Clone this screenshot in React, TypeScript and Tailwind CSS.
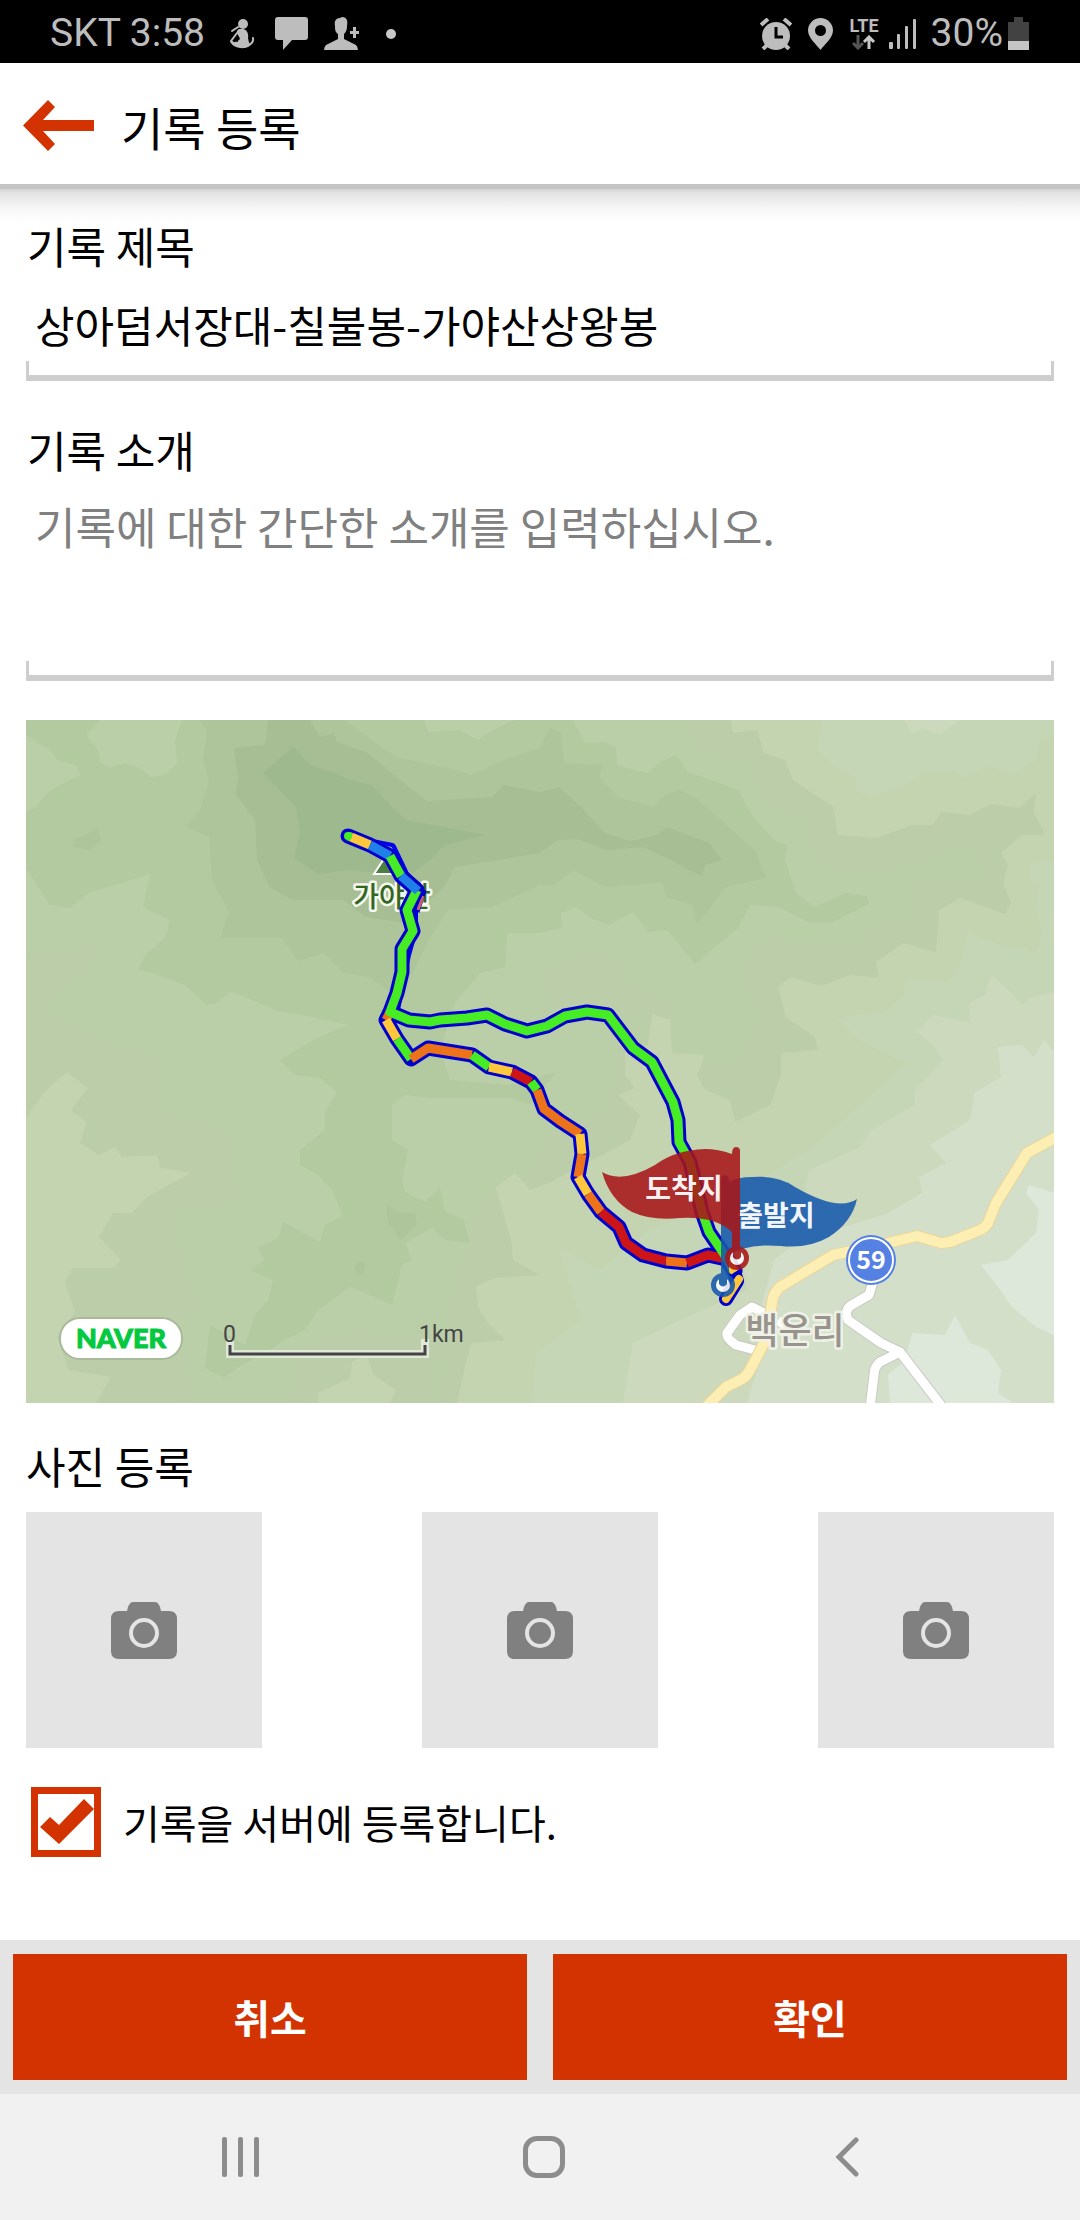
import React, { useState } from 'react';

const COLORS = {
  green: '#46ec24',
  yellow: '#ffc83c',
  orange: '#ec731a',
  red: '#cd1517',
  blue: '#2080e8',
};

// terrain, painted from the valley tones up to the ridge
const terrain = [
  { fill: '#bccdaa', d: 'M678 720L705 753L747 763L767 800L809 823L809 853L833 873L884 873L977 842L981 877L915 883L912 917L871 927L860 945L767 938L743 963L747 997L764 1010L740 1060L620 1060L600 1110L545 1140L520 1180L480 1200L450 1300L440 1403L1054 1403L1054 720Z' },
  { fill: '#bccdaa', d: 'M540 990L548 968L585 952L625 960L627 985L672 998L670 1020L560 1015Z' },
  { fill: '#bccdaa', d: 'M26 955L96 943L90 965L45 1015L160 1060L160 1110L225 1130L240 1200L175 1215L180 1260L200 1300L170 1330L190 1370L190 1403L26 1403Z' },
  { fill: '#bccdaa', d: 'M300 1345L360 1330L440 1340L430 1403L290 1403Z' },
  { fill: '#c4d4b1', d: 'M26 1118L44 1092L67 1072L88 1088L71 1110L86 1122L80 1143L99 1155L115 1147L122 1157L157 1155L161 1168L191 1173L147 1197L132 1213L113 1213L99 1237L121 1260L113 1268L73 1268L65 1282L75 1312L57 1337L69 1370L111 1377L96 1403L26 1403Z' },
  { fill: '#c4d4b1', d: 'M318 1393L350 1378L352 1362L366 1355L374 1375L396 1390L390 1403L318 1403Z' },
  { fill: '#c4d4b1', d: 'M731 720L733 733L757 730L764 753L785 760L793 780L833 807L838 835L877 838L912 825L933 825L941 812L969 815L991 804L1019 808L1036 793L1034 813L1045 835L1022 835L1001 853L1008 865L1003 883L1011 903L1005 914L960 898L939 910L936 952L903 943L876 962L879 978L850 975L821 986L791 977L778 987L786 1017L815 1037L818 1050L781 1053L781 1075L770 1105L735 1122L730 1100L705 1090L697 1075L705 1055L672 1053L670 1020L652 1014L648 1045L625 1050L625 1075L635 1088L618 1095L640 1115L630 1140L549 1183L530 1190L515 1173L496 1187L511 1240L513 1260L540 1275L494 1278L476 1287L478 1307L488 1323L505 1340L471 1343L465 1367L457 1403L1054 1403L1054 720Z' },
  { fill: '#c5d6b6', d: 'M822 720L817 750L836 768L855 777L857 792L871 796L902 787L922 772L953 770L964 778L988 765L1012 775L1036 760L1039 740L1054 735L1054 720Z' },
  { fill: '#c5d6b6', d: 'M1054 860L1029 863L1031 882L1039 883L1036 913L1043 930L1036 955L1022 945L1010 949L967 932L960 967L946 982L908 977L902 997L884 1012L836 1018L864 1043L905 1063L877 1090L836 1127L809 1150L760 1180L650 1230L600 1270L559 1247L570 1287L582 1320L536 1353L532 1403L1054 1403Z' },
  { fill: '#ccd9bc', d: 'M904 720L912 733L922 728L940 735L960 720ZM991 975L1008 990L1022 1005L1029 998L1054 992L1054 1403L623 1403L633 1343L674 1323L747 1290L740 1240L800 1210L809 1170L860 1147L871 1130L915 1105L915 1090L943 1060L933 1045L917 1032L933 1015L970 1022L969 1003L985 995Z' },
  { fill: '#d3dfc8', d: 'M1044 1040L1054 1052L1054 1403L747 1403L762 1353L760 1310L774 1260L795 1243L888 1213L922 1193L919 1177L946 1163L930 1145L970 1120L974 1093L1001 1077L998 1047L1022 1045L1034 1057Z' },
  { fill: '#dee8da', d: 'M1054 1193L1045 1190L1029 1185L1026 1193L1039 1210L1036 1233L1008 1260L981 1265L998 1287L1012 1307L1036 1327L1054 1335ZM955 1315L970 1343L988 1350L1001 1370L998 1393L1013 1403L890 1403L888 1375L905 1360L912 1333L945 1335Z' },
  { fill: '#b3c99f', d: 'M26 720L100 720L86 735L98 750L100 762L110 768L125 763L140 768L150 777L165 775L177 763L175 740L182 720L573 720L585 743L605 742L616 747L617 765L647 773L660 762L676 755L688 772L738 790L753 817L774 840L787 845L785 860L796 893L814 907L846 893L867 896L869 904L833 922L810 923L778 907L750 905L738 928L709 952L695 964L667 930L648 932L633 912L609 925L590 918L576 907L561 913L562 928L540 933L507 933L505 967L480 973L455 1003L440 1050L450 1080L510 1085L530 1080L556 1072L530 1105L512 1098L430 1098L405 1095L392 1105L392 1140L408 1150L402 1180L405 1192L425 1202L440 1188L445 1212L464 1220L470 1243L445 1240L432 1228L405 1243L412 1260L402 1265L392 1305L370 1295L350 1287L318 1310L305 1330L285 1340L262 1355L240 1366L224 1378L205 1368L210 1325L245 1345L255 1315L268 1300L273 1280L250 1270L265 1260L258 1248L278 1238L283 1222L320 1242L325 1225L343 1216L332 1190L318 1175L300 1165L300 1150L325 1130L325 1112L337 1092L320 1078L295 1075L280 1060L313 1040L347 1025L313 1017L275 1010L231 991L215 1004L205 1004L185 985L150 972L138 970L145 955L165 938L170 920L143 907L150 874L115 885L90 892L70 908L50 905L26 868L26 812L35 808L45 795L60 785L80 775L76 765L57 760L50 750L26 735Z' },
  { fill: '#bacfa8', d: 'M424 720L428 732L460 730L478 740L492 730L515 720Z' },
  { fill: '#aec59b', d: 'M200 720L207 733L203 760L209 782L200 810L186 827L209 837L212 880L229 912L220 938L282 938L298 961L324 953L344 973L370 977L400 1000L427 943L448 910L492 907L540 885L554 885L573 870L605 887L662 883L666 897L692 905L697 924L726 887L766 878L755 850L729 827L695 797L678 790L662 797L654 807L619 798L599 777L602 765L564 763L561 733L550 727L540 748L503 760L472 775L444 767L396 757L368 737L345 720Z' },
  { fill: '#a7be94', d: 'M268 720L265 745L234 748L238 777L236 795L255 820L257 860L269 887L293 900L344 900L365 917L406 923L444 887L455 867L540 853L557 840L578 839L605 850L643 847L671 860L688 870L702 876L705 865L722 860L709 843L667 827L657 835L630 841L605 833L581 807L559 787L540 792L503 785L492 797L427 801L400 780L368 753L337 742L334 733L320 737L310 720Z' },
  { fill: '#9fb98f', d: 'M293 747L310 765L334 773L350 780L372 785L390 805L406 820L444 827L486 835L444 845L430 860L410 875L344 870L320 875L294 858L300 833L296 807L263 773Z' },
  { fill: '#aec59b', d: 'M73 840L88 834L97 828L101 840L90 850L73 847ZM387 1203L395 1212L415 1213L417 1225L400 1240L387 1220ZM355 1265L362 1260L366 1268L360 1275L355 1270Z' },
];

const climb = [
  { color: COLORS.orange, points: '390,1012 386,1020' },
  { color: COLORS.yellow, points: '386,1020 397,1039' },
  { color: COLORS.green, points: '397,1039 411,1059' },
  { color: COLORS.orange, points: '411,1059 428,1048 472,1055' },
  { color: COLORS.green, points: '472,1055 489,1067' },
  { color: COLORS.yellow, points: '489,1067 512,1072' },
  { color: COLORS.red, points: '512,1072 531,1082' },
  { color: COLORS.green, points: '531,1082 537,1090' },
  { color: COLORS.orange, points: '537,1090 544,1109 560,1121 580,1134' },
  { color: COLORS.yellow, points: '580,1134 582,1154' },
  { color: COLORS.orange, points: '582,1154 578,1177' },
  { color: COLORS.yellow, points: '578,1177 588,1194' },
  { color: COLORS.orange, points: '588,1194 601,1212' },
  { color: COLORS.red, points: '601,1212 619,1227 626,1243 643,1255 666,1261' },
  { color: COLORS.orange, points: '666,1261 687,1263' },
  { color: COLORS.red, points: '687,1263 708,1255 726,1259' },
];

const summit = [
  { color: COLORS.green, points: '348,836 351,837' },
  { color: COLORS.yellow, points: '351,837 370,845' },
  { color: COLORS.blue, points: '370,845 390,856' },
  { color: COLORS.green, points: '390,856 401,876' },
  { color: COLORS.blue, points: '401,876 418,891' },
];

const CLIMB_LINE =
  '390,1012 386,1020 397,1039 411,1059 428,1048 472,1055 489,1067 512,1072 531,1082 537,1090 544,1109 560,1121 580,1134 582,1154 578,1177 588,1194 601,1212 619,1227 626,1243 643,1255 666,1261 687,1263 708,1255 726,1259';
const DESCENT_LINE =
  '417,890 407,910 413,931 402,949 402,972 397,993 390,1012 409,1020 430,1022 440,1020 467,1018 487,1015 505,1024 527,1031 547,1026 565,1016 587,1012 608,1015 633,1048 652,1062 673,1102 678,1120 679,1142 690,1162 702,1212 709,1232 728,1260 734,1272';
const YELLOW_ROAD =
  'M1060 1135L1027 1153L996 1203L988 1223Q985 1228 980 1230L950 1242L941 1243L917 1236L871 1247L833 1255L780 1287Q773 1293 772 1303L768 1330L764 1343L750 1370Q747 1376 742 1379L726 1387L703 1410';
const WHITE_ROADS =
  'M874 1278L869 1295L850 1306Q844 1312 848 1320L881 1343L900 1352L943 1408M900 1352L880 1362Q874 1367 874 1375L870 1408M766 1314L752 1307L740 1315L727 1333Q726 1338 736 1345L755 1350M778 1320L790 1330';

const StatusBar = () => (
  <div className="flex h-[63px] items-center justify-between bg-black pt-1 pr-[51px] pl-[50px] font-[Roboto,sans-serif] text-[39px] leading-none text-[#bdbdbd]">
    <div className="flex items-center">
      <span className="whitespace-nowrap">SKT 3:58</span>
      <svg className="ml-[24px] h-[30px] w-[26px]" viewBox="0 0 26 30" fill="none" stroke="currentColor">
        <circle cx="14" cy="5" r="5" fill="currentColor" stroke="none" />
        <path d="M10 10C5 13 10 16 11 20C8 23 4 24 1 23C5 30 19 32 23 24C20 26 20 23 19 19C20 14 17 10 14 10Z" fill="currentColor" stroke="none" />
        <path d="M9 8L3 12M8 14L2 22L8 27M24 19Q25 24 18 27" strokeWidth="2" strokeLinecap="round" />
        <path d="M9 18L6 22L9 23Z" fill="#000" stroke="none" />
      </svg>
      <svg className="ml-[20px] h-[33px] w-[33px]" viewBox="0 0 33 33" fill="currentColor">
        <path d="M3 0H30Q33 0 33 3V20Q33 23 30 23H17L8 33V23H3Q0 23 0 20V3Q0 0 3 0Z" />
      </svg>
      <svg className="ml-[16px] h-[33px] w-[35px]" viewBox="0 0 35 33" fill="currentColor">
        <path d="M18 0C23 0 24 4 23 9C23 13 22 15 20 17V22L32 28Q34 30 34 33H0Q0 30 2 28L14 22V17C11 15 11 12 11 9C10 4 12 1 16 1Z" />
        <path d="M29 10H32V14H35V17H32V21H29V17H26V14H29Z" />
      </svg>
      <span className="ml-[27px] size-[10px] rounded-full bg-[#c9c9c9]" />
    </div>
    <div className="flex items-center">
      <svg className="h-[32px] w-[32px]" viewBox="0 0 32 32">
        <circle cx="16" cy="18" r="14" fill="#bdbdbd" />
        <path d="M1 7L8 1M31 7L24 1" stroke="#bdbdbd" strokeWidth="4" />
        <path d="M7 27L3 31M25 27L29 31" stroke="#bdbdbd" strokeWidth="4" />
        <path d="M16 9V19H23" stroke="#000" strokeWidth="3" fill="none" />
      </svg>
      <svg className="ml-[16px] h-[32px] w-[25px]" viewBox="0 0 25 32" fill="#bdbdbd" fillRule="evenodd">
        <path d="M12.500 0A12.500 12.500 0 0 1 25 12.500C25 20 16 27 12.500 32C9 27 0 20 0 12.500A12.500 12.500 0 0 1 12.500 0ZM12.500 7A5.500 5.500 0 1 0 12.500 18A5.500 5.500 0 1 0 12.500 7Z" />
      </svg>
      <div className="ml-[17px] flex flex-col items-center">
        <span className="text-[18px] leading-[18px] font-bold">LTE</span>
        <svg className="h-[15px] w-[24px]" viewBox="0 0 24 15" fill="none" strokeWidth="3">
          <path d="M6 0V12M1 8L6 13L11 8" stroke="#555" />
          <path d="M17 14V2M12 7L17 2L22 7" stroke="#c9c9c9" />
        </svg>
      </div>
      <svg className="ml-[10px] h-[32px] w-[28px]" viewBox="0 0 28 32" fill="#bdbdbd">
        <rect x="0" y="24" width="4" height="7" rx="1" />
        <rect x="8" y="16" width="3" height="15" rx="1" />
        <rect x="16" y="8" width="3" height="23" rx="1" />
        <rect x="24" y="1" width="3" height="30" rx="1" />
      </svg>
      <span className="ml-[14px]">30%</span>
      <svg className="ml-[5px] h-[33px] w-[21px]" viewBox="0 0 21 33">
        <path d="M6 0H15V5H21V25H0V5H6Z" fill="#424242" />
        <path d="M0 24H21V33H0Z" fill="#c4c4c4" />
      </svg>
    </div>
  </div>
);

const Header = () => (
  <header className="flex h-[126px] items-center border-b-[5px] border-[#c4c4c4] bg-white pt-1 pl-[23px]">
    <button type="button" aria-label="뒤로" className="h-[51px] w-[71px]">
      <svg viewBox="0 0 71 51" fill="#d33300">
        <path d="M0 25.500L25 0L32 7L20 20H71V31H20L32 44L25 51Z" />
      </svg>
    </button>
    <h1 className="ml-[27px] text-[46px] leading-[60px]">기록 등록</h1>
  </header>
);

const FieldLine = () => (
  <div className="h-[20px] border-x-[3px] border-b-[6px] border-[#cecece]" />
);

const RouteMap = () => (
  <svg viewBox="26 720 1028 683" className="mt-[39px] block h-auto w-full bg-[#bacfa8]" role="img" aria-label="가야산">
    {terrain.map((area, index) => (
      <path key={index} d={area.d} fill={area.fill} />
    ))}

    <g fill="none" strokeLinejoin="round">
      <path d={WHITE_ROADS} stroke="#c9c9c4" strokeWidth="11" />
      <path d={WHITE_ROADS} stroke="#fff" strokeWidth="9" />
      <path d={YELLOW_ROAD} stroke="#ead69a" strokeWidth="12" />
      <path d={YELLOW_ROAD} stroke="#fdefb3" strokeWidth="10" />
    </g>

    <path d="M391 848L409 874H374Z" fill="#4d7f40" stroke="#fff" strokeWidth="2" />
    <g strokeLinejoin="round" paintOrder="stroke" textAnchor="middle">
      <text x="392" y="907" fontSize="28" fontWeight="500" fill="#34661f" stroke="#f4f8ee" strokeWidth="5">가야산</text>
      <text x="795" y="1344" fontSize="36" fontWeight="500" fill="#98938d" stroke="#eef2e6" strokeWidth="5">백운리</text>
    </g>

    <circle cx="871" cy="1260" r="25" fill="#5581e3" />
    <circle cx="871" cy="1260" r="22" fill="none" stroke="#fff" strokeWidth="2" />
    <text x="871" y="1269" fontSize="25" fontWeight="700" fill="#fff" textAnchor="middle">59</text>

    {/* track: blue casing first, then the speed colours */}
    <g fill="none" strokeLinejoin="round">
      <polyline points="350,838 372,843 392,847 405,874 420,892 414,912 414,930 407,955 402,978 396,1010" stroke="#0000ee" strokeWidth="8" strokeLinecap="round" />
      <polyline points="380,845 391,848 401,868" stroke="#a7be94" strokeWidth="2" />
      <polyline points="424,890 417,912" stroke="#0000cd" strokeWidth="5" />
      <polyline points="423,896 418,910" stroke="#cc6070" strokeWidth="3" />
      <polyline points={CLIMB_LINE} stroke="#0000cd" strokeWidth="15" />
      <polyline points="734,1272 737,1281 726,1299" stroke="#0000cd" strokeWidth="14" strokeLinecap="round" />
      <polyline points="728,1262 735,1271" stroke="#0000cd" strokeWidth="15" strokeLinecap="round" />
      <polyline points={DESCENT_LINE} stroke="#0000cd" strokeWidth="15" />
      <polyline points="348,836 370,845 390,856 401,876 417,890" stroke="#0000cd" strokeWidth="15" strokeLinecap="round" />
      {climb.map((part) => (
        <polyline key={part.points} points={part.points} stroke={part.color} strokeWidth="9" />
      ))}
      <polyline points="739,1279 726,1299" stroke={COLORS.yellow} strokeWidth="8" strokeLinecap="round" />
      <polyline points={DESCENT_LINE} stroke={COLORS.green} strokeWidth="9" />
      <polyline points="728,1261 735,1272" stroke={COLORS.yellow} strokeWidth="9" />
      {summit.map((part) => (
        <polyline key={part.points} points={part.points} stroke={part.color} strokeWidth="9" />
      ))}
      <circle cx="348" cy="836" r="4" fill={COLORS.green} />
    </g>

    {/* start flag */}
    <g opacity="0.88" fill="#1659ac">
      <path d="M721 1179Q721 1175 725 1175Q729 1175 729 1182Q738 1177 752 1177Q778 1175 795 1187Q838 1212 857 1199Q852 1222 829 1237Q808 1249 781 1246Q745 1243 729 1256V1275H721Z" />
      <circle cx="723" cy="1285" r="12" />
      <circle cx="723" cy="1285" r="7" fill="#fff" />
      <path d="M719 1276H727V1284Q723 1289 719 1284Z" />
    </g>
    <text x="776" y="1226" fontSize="28" fontWeight="700" fill="#fff" fillOpacity="0.95" textAnchor="middle">출발지</text>

    {/* finish flag */}
    <g opacity="0.88" fill="#a8171a">
      <path d="M740 1151Q740 1147 736 1147Q732 1147 732 1154Q718 1149 705 1149Q675 1150 655 1165Q622 1184 602 1172Q610 1200 632 1212Q652 1221 680 1218Q715 1216 732 1232V1249H740Z" />
      <circle cx="737" cy="1258" r="12" />
      <circle cx="737" cy="1258" r="7" fill="#fff" />
      <path d="M733 1249H741V1257Q737 1262 733 1257Z" />
    </g>
    <text x="684" y="1199" fontSize="28" fontWeight="700" fill="#fff" fillOpacity="0.95" textAnchor="middle">도착지</text>

    <rect x="60" y="1318" width="122" height="41" rx="20" fill="#fff" stroke="#a9b99a" strokeWidth="2" />
    <text x="121" y="1348" fontSize="27" fontWeight="900" fill="#03c93f" stroke="#03c93f" strokeWidth="1" textAnchor="middle" className="font-[Lato,sans-serif]">NAVER</text>

    <path d="M230 1343V1354H425V1343" fill="none" stroke="#e0e8d8" strokeWidth="8" strokeLinecap="square" />
    <path d="M230 1345V1354H425V1345" fill="none" stroke="#444" strokeWidth="3" />
    <g fontSize="23" fill="#444" className="font-[Roboto,sans-serif]">
      <text x="223" y="1342">0</text>
      <text x="419" y="1342">1km</text>
    </g>
  </svg>
);

const PhotoButton = ({ index }: { index: number }) => (
  <button type="button" aria-label={`사진 ${index}`} className="flex aspect-square w-[23%] items-center justify-center bg-[#e4e4e4]">
    <svg className="h-[57px] w-[66px]" viewBox="0 0 66 57">
      <path d="M22 0H44Q47 0 49 5L50 9H58Q66 9 66 17V49Q66 57 58 57H8Q0 57 0 49V17Q0 9 8 9H16L17 5Q19 0 22 0Z" fill="#808080" />
      <circle cx="33" cy="31" r="13" fill="none" stroke="#e4e4e4" strokeWidth="4" />
    </svg>
  </button>
);

const App = () => {
  const [title, setTitle] = useState('상아덤서장대-칠불봉-가야산상왕봉');
  const [intro, setIntro] = useState('');
  const [upload, setUpload] = useState(true);

  return (
    <div className="flex min-h-screen flex-col bg-white font-['Noto_Sans_CJK_KR',sans-serif] text-black">
      <StatusBar />
      <Header />

      <main className="flex grow flex-col bg-[linear-gradient(#d2d2d2,#e3e3e3_4px,#f7f7f7_20px,#fff_34px)] px-[26px] pt-[26px]">
        <label htmlFor="title" className="pl-px text-[43px] leading-[60px]">기록 제목</label>
        <input
          id="title"
          type="text"
          value={title}
          onChange={(e) => setTitle(e.target.value)}
          className="h-[86px] w-full bg-transparent pt-[12px] pl-[9px] text-[43px] outline-none"
        />
        <FieldLine />

        <label htmlFor="intro" className="mt-[38px] pl-px text-[43px] leading-[60px]">기록 소개</label>
        <textarea
          id="intro"
          value={intro}
          onChange={(e) => setIntro(e.target.value)}
          placeholder="기록에 대한 간단한 소개를 입력하십시오."
          className="block h-[182px] w-full resize-none bg-transparent pt-[17px] pl-[9px] text-[44px] leading-[60px] outline-none placeholder:text-[#808080]"
        />
        <FieldLine />

        <RouteMap />

        <h2 className="mt-[32px] text-[43px] leading-[60px]">사진 등록</h2>
        <div className="mt-[17px] flex justify-between">
          {[1, 2, 3].map((index) => (
            <PhotoButton key={index} index={index} />
          ))}
        </div>

        <label className="mt-[39px] mb-[83px] flex items-center pl-[5px] text-[40px] leading-[60px]">
          <span className="relative size-[70px]">
            <input
              type="checkbox"
              checked={upload}
              onChange={(e) => setUpload(e.target.checked)}
              className="peer block size-full appearance-none border-[7px] border-[#d33300] bg-white"
            />
            <svg viewBox="0 0 70 70" className="pointer-events-none absolute inset-0 hidden peer-checked:block" fill="#d33300">
              <path d="M9 40L19 30L28 38L53 12L63 22L28 57Z" />
            </svg>
          </span>
          <span className="ml-[22px]">기록을 서버에 등록합니다.</span>
        </label>
      </main>

      <footer>
        <div className="grid grid-cols-2 gap-[26px] bg-[#e4e4e4] px-[13px] py-[14px] text-[40px] font-bold text-white">
          <button type="button" className="h-[126px] bg-[#d33300]">취소</button>
          <button type="button" className="h-[126px] bg-[#d33300]">확인</button>
        </div>
        <nav className="grid h-[126px] grid-cols-3 items-center justify-items-center bg-[#f1f1f1] pr-[82px] pl-[90px]">
          <button type="button" aria-label="최근 앱">
            <svg className="h-[40px] w-[38px]" viewBox="0 0 38 40" fill="#8d8d8d">
              <rect x="0" y="0" width="5" height="40" rx="2" />
              <rect x="16" y="0" width="5" height="40" rx="2" />
              <rect x="32" y="0" width="5" height="40" rx="2" />
            </svg>
          </button>
          <button type="button" aria-label="홈" className="h-[42px] w-[42px] rounded-[14px] border-[5px] border-[#8d8d8d]" />
          <button type="button" aria-label="뒤로 가기">
            <svg className="h-[40px] w-[24px]" viewBox="0 0 24 40" fill="none" stroke="#8d8d8d" strokeWidth="5" strokeLinecap="round">
              <path d="M21 3L4 20L21 37" />
            </svg>
          </button>
        </nav>
      </footer>
    </div>
  );
};

export default App;
